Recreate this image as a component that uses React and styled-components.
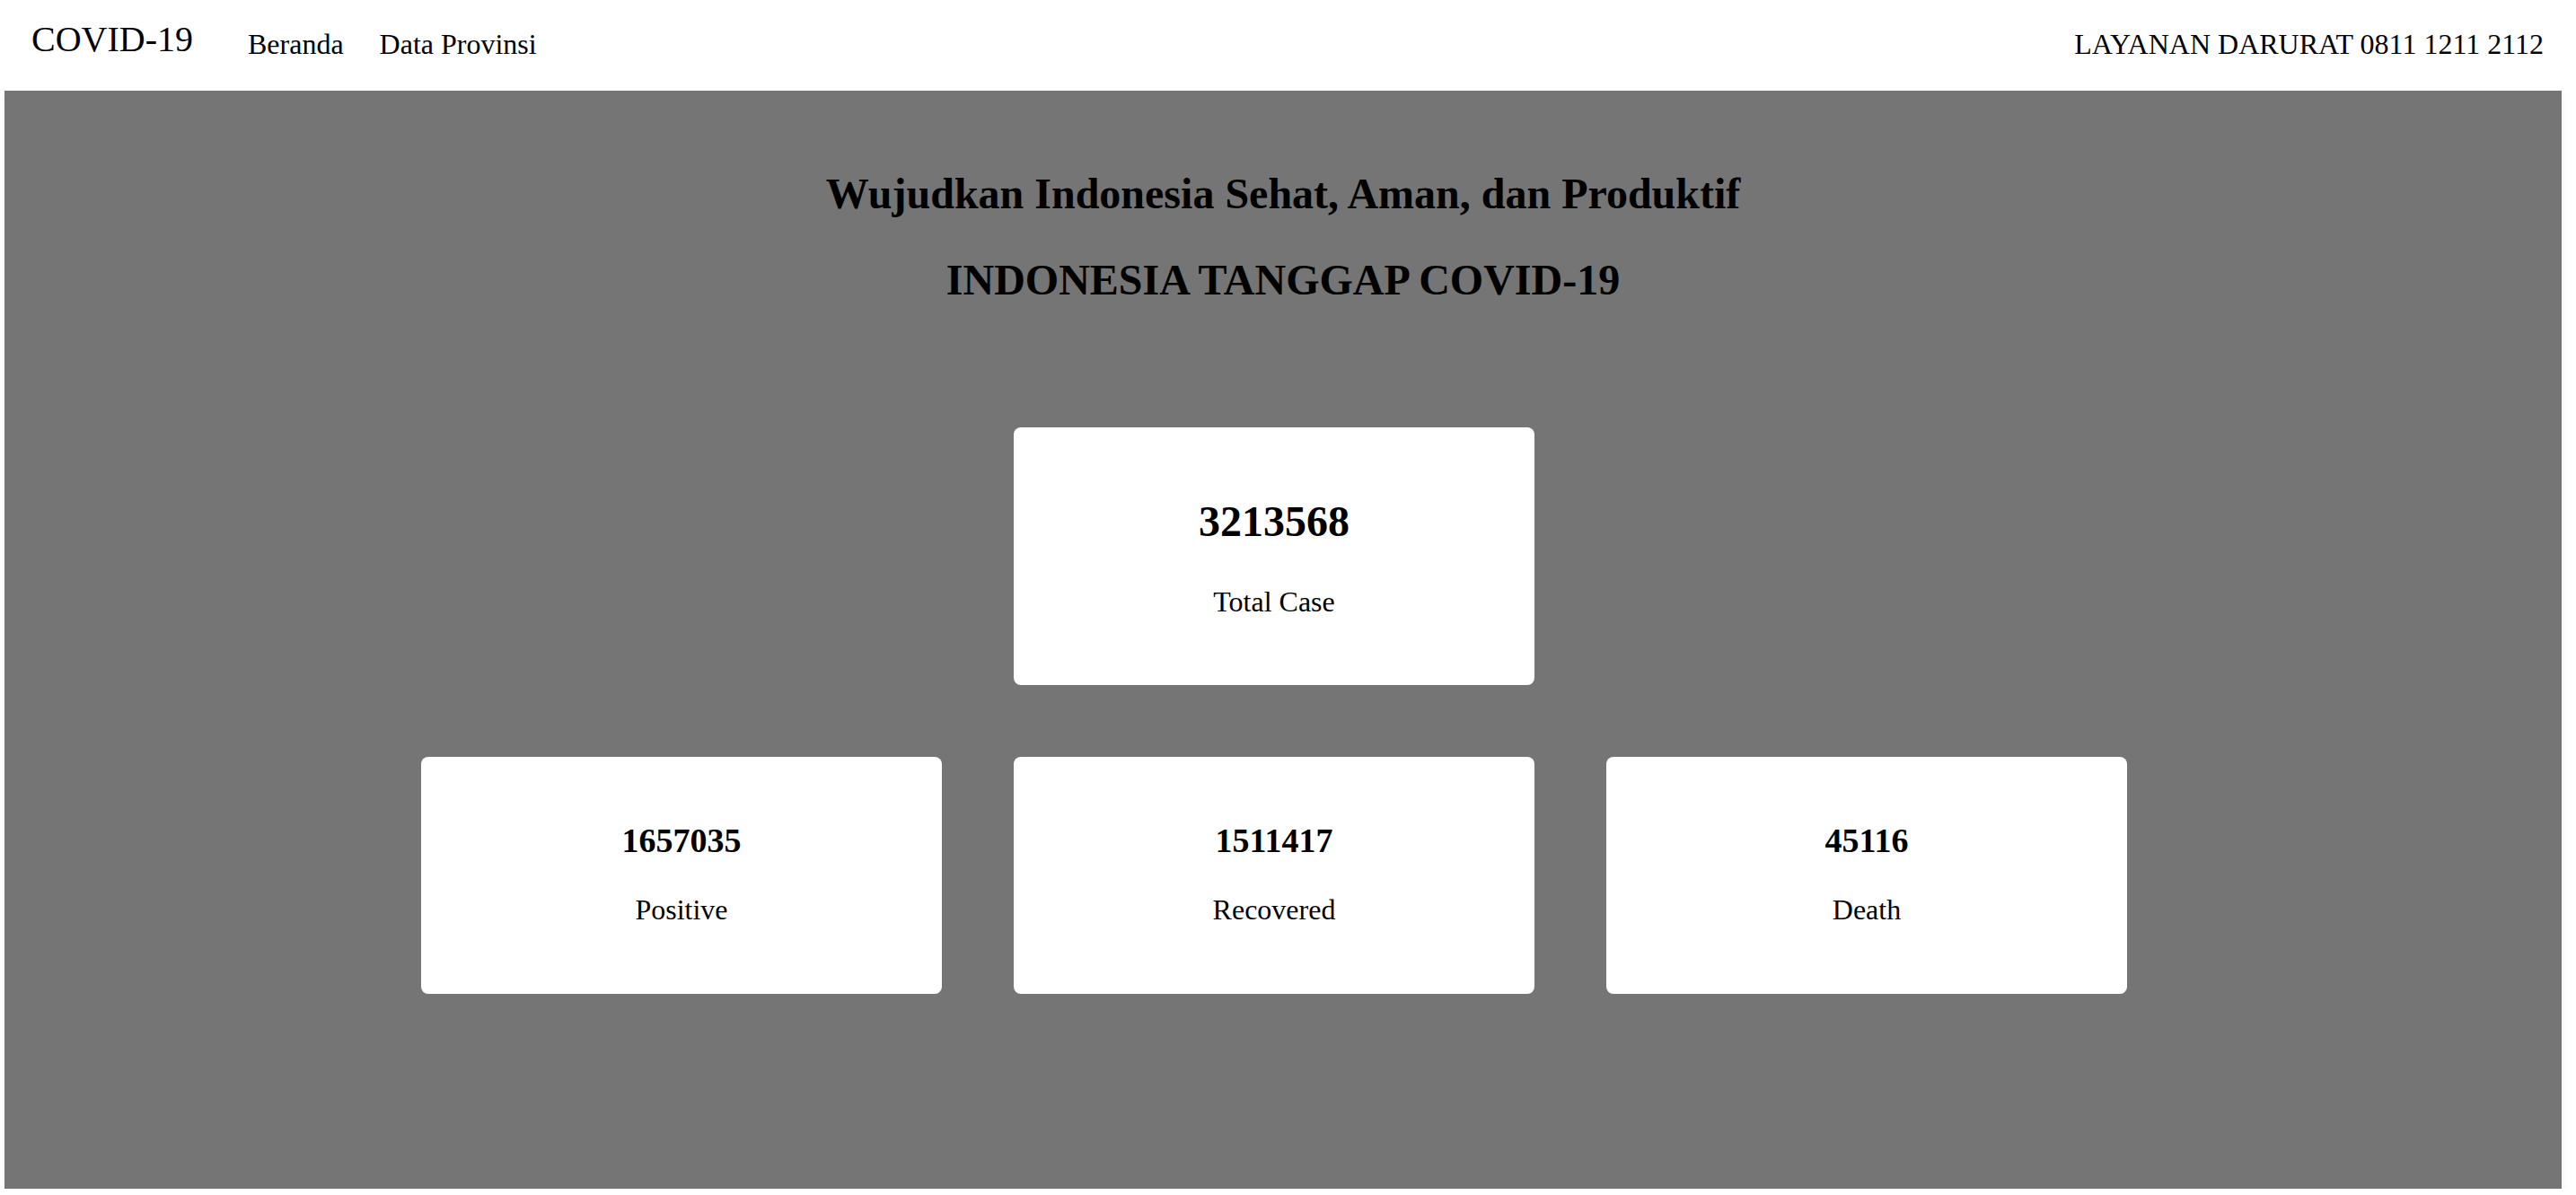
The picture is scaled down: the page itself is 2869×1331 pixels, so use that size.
import styled, { createGlobalStyle } from "styled-components";

const stats = [
  { id: "positive", value: 1657035, label: "Positive" },
  { id: "recovered", value: 1511417, label: "Recovered" },
  { id: "death", value: 45116, label: "Death" },
];

export default function App() {
  return (
    <>
      <GlobalStyle />
      <Navbar>
        <Brand>COVID-19</Brand>
        <NavLinks>
          <NavLink href="#">Beranda</NavLink>
          <NavLink href="#">Data Provinsi</NavLink>
        </NavLinks>
        <Hotline>LAYANAN DARURAT 0811 1211 2112</Hotline>
      </Navbar>
      <Hero>
        <Title>Wujudkan Indonesia Sehat, Aman, dan Produktif</Title>
        <Title>INDONESIA TANGGAP COVID-19</Title>
        <CardGrid>
          <Card $big $row={1} $column={2}>
            <Number $big>3213568</Number>
            <Label>Total Case</Label>
          </Card>
          {stats.map((s, i) => (
            <Card key={s.id} $row={2} $column={i + 1}>
              <Number>{s.value}</Number>
              <Label>{s.label}</Label>
            </Card>
          ))}
        </CardGrid>
      </Hero>
    </>
  );
}

// STYLED COMPONENTS
const GlobalStyle = createGlobalStyle`
  body {
    margin: 0;
    background: #ffffff;
    font-family: "Liberation Serif", "Times New Roman", serif;
    color: #000000;
  }
`;

const Navbar = styled.nav`
  display: flex;
  align-items: flex-start;
  height: 101px;
  box-sizing: border-box;
  padding: 21px 36px 0 35px;
`;

const Brand = styled.div`
  font-size: 40px;
  line-height: 1.15;
  margin-right: 61px;
`;

const NavLinks = styled.div`
  display: flex;
  gap: 40px;
  margin-top: 10px;
  flex: 1;
`;

const NavLink = styled.a`
  font-size: 32px;
  line-height: 1.15;
  color: #000000;
  text-decoration: none;
`;

const Hotline = styled.div`
  font-size: 32px;
  line-height: 1.15;
  margin-top: 10px;
`;

const Hero = styled.section`
  margin-left: 5px;
  width: 2848px;
  height: 1223px;
  box-sizing: border-box;
  padding-top: 87px;
  background: #747574;
  box-shadow: 0 4px 10px rgba(0, 0, 0, 0.06);
  display: flex;
  flex-direction: column;
  align-items: center;
`;

const Title = styled.h1`
  margin: 0 0 41px;
  font-size: 48px;
  line-height: 1.15;
  font-weight: bold;
  text-align: center;
  &:last-of-type {
    margin-bottom: 0;
  }
`;

const CardGrid = styled.div`
  display: grid;
  grid-template-columns: repeat(3, 580px);
  gap: 80px;
  margin-top: 137px;
  margin-right: 20px;
`;

const Card = styled.div`
  grid-row: ${(p) => p.$row};
  grid-column: ${(p) => p.$column};
  background: #ffffff;
  border-radius: 8px;
  box-sizing: border-box;
  padding: ${(p) => (p.$big ? "77px 0 75px" : "72px 0 75px")};
  display: flex;
  flex-direction: column;
  align-items: center;
  gap: ${(p) => (p.$big ? "43px" : "36px")};
`;

const Number = styled.div`
  font-size: ${(p) => (p.$big ? "48px" : "38px")};
  line-height: 1.15;
  font-weight: bold;
`;

const Label = styled.div`
  font-size: 32px;
  line-height: 1.15;
`;
